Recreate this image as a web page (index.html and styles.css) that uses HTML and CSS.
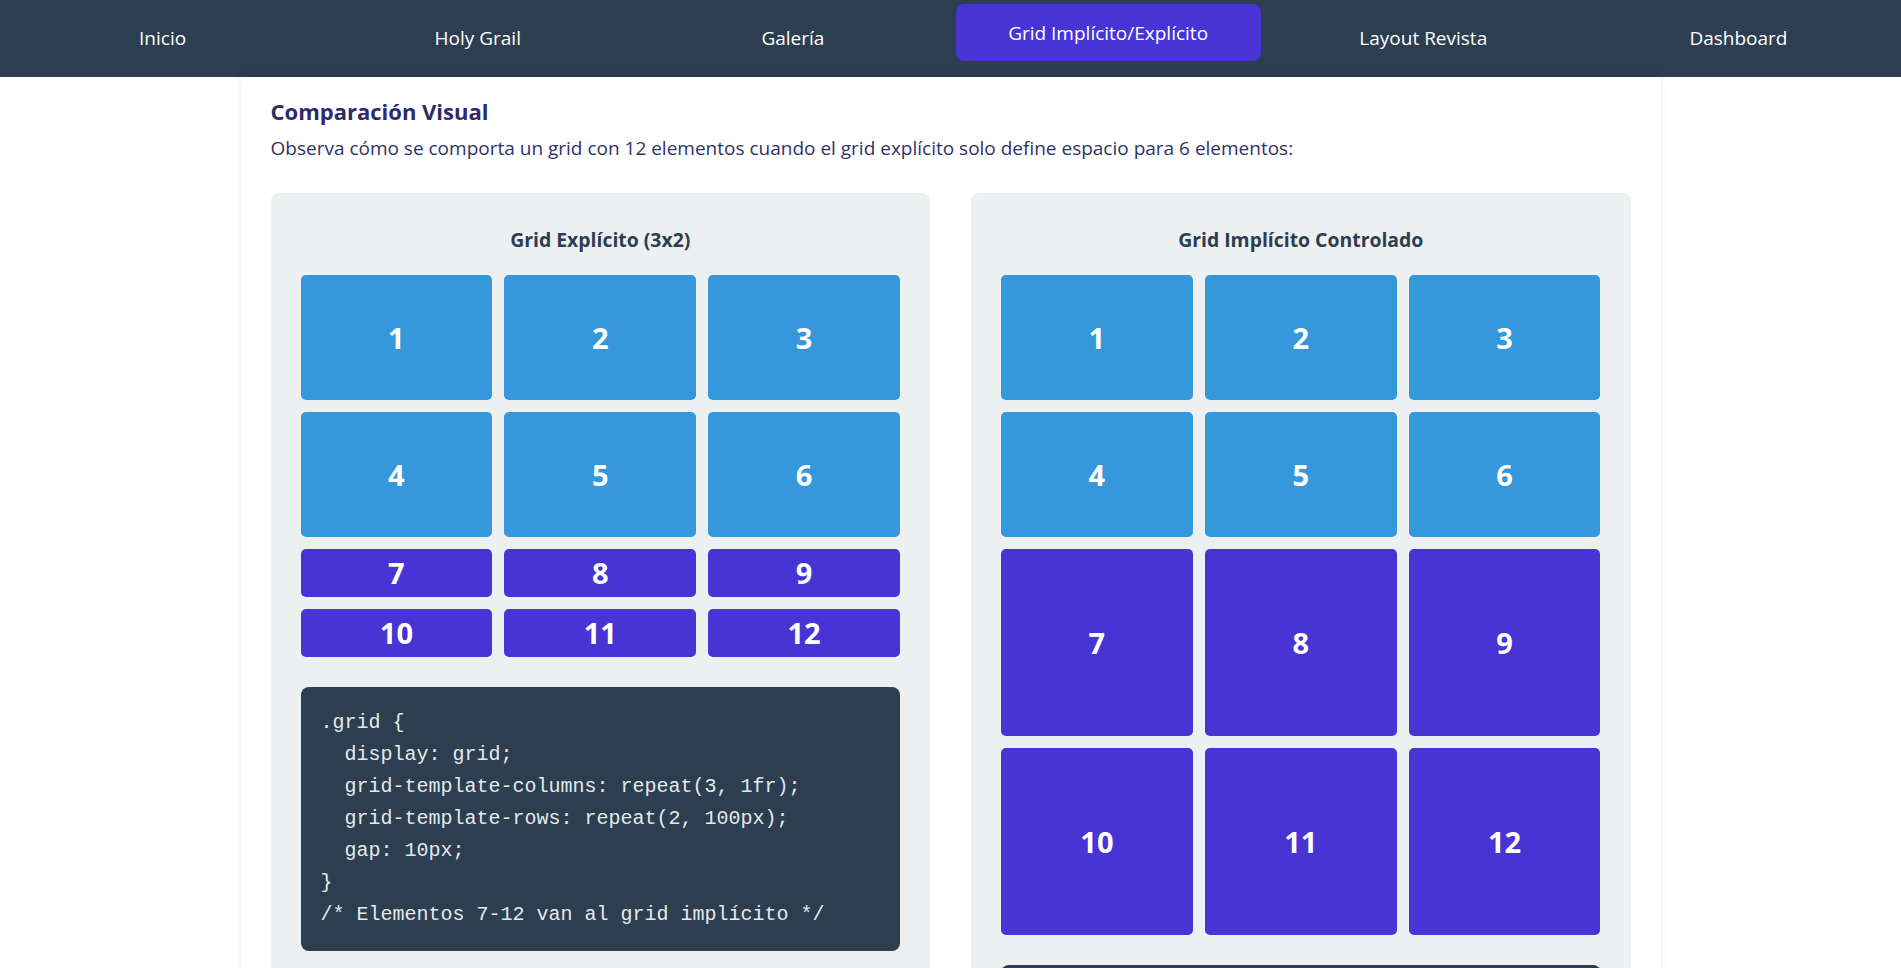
FILE: index.html
```html
<!DOCTYPE html>
<html lang="es">
<head>
<meta charset="utf-8">
<title>Grid Implícito/Explícito</title>
<link rel="stylesheet" href="styles.css">
</head>
<body>
<nav class="topnav">
  <a class="nav-link" href="#">Inicio</a>
  <a class="nav-link" href="#">Holy Grail</a>
  <a class="nav-link" href="#">Galería</a>
  <a class="nav-link active" href="#">Grid Implícito/Explícito</a>
  <a class="nav-link" href="#">Layout Revista</a>
  <a class="nav-link" href="#">Dashboard</a>
</nav>
<main class="container">
  <section class="section">
    <h2 class="section-title">Comparación Visual</h2>
    <p class="section-text">Observa cómo se comporta un grid con 12 elementos cuando el grid explícito solo define espacio para 6 elementos:</p>
    <div class="compare">
      <div class="demo-card">
        <h3 class="demo-title">Grid Explícito (3x2)</h3>
        <div class="demo-grid demo-grid-explicit">
          <div class="cell cell-explicit">1</div>
          <div class="cell cell-explicit">2</div>
          <div class="cell cell-explicit">3</div>
          <div class="cell cell-explicit">4</div>
          <div class="cell cell-explicit">5</div>
          <div class="cell cell-explicit">6</div>
          <div class="cell cell-implicit">7</div>
          <div class="cell cell-implicit">8</div>
          <div class="cell cell-implicit">9</div>
          <div class="cell cell-implicit">10</div>
          <div class="cell cell-implicit">11</div>
          <div class="cell cell-implicit">12</div>
        </div>
        <pre class="code">.grid {
  display: grid;
  grid-template-columns: repeat(3, 1fr);
  grid-template-rows: repeat(2, 100px);
  gap: 10px;
}
/* Elementos 7-12 van al grid implícito */</pre>
      </div>
      <div class="demo-card">
        <h3 class="demo-title">Grid Implícito Controlado</h3>
        <div class="demo-grid demo-grid-controlled">
          <div class="cell cell-explicit">1</div>
          <div class="cell cell-explicit">2</div>
          <div class="cell cell-explicit">3</div>
          <div class="cell cell-explicit">4</div>
          <div class="cell cell-explicit">5</div>
          <div class="cell cell-explicit">6</div>
          <div class="cell cell-implicit">7</div>
          <div class="cell cell-implicit">8</div>
          <div class="cell cell-implicit">9</div>
          <div class="cell cell-implicit">10</div>
          <div class="cell cell-implicit">11</div>
          <div class="cell cell-implicit">12</div>
        </div>
        <pre class="code">.grid {
  display: grid;
  grid-template-columns: repeat(3, 1fr);
  grid-template-rows: repeat(2, 100px);
  grid-auto-rows: 150px;
  gap: 10px;
}</pre>
      </div>
    </div>
  </section>
</main>
</body>
</html>
```

FILE: styles.css
```css
* {
  box-sizing: border-box;
}

html, body {
  margin: 0;
  padding: 0;
  background: #ffffff;
}

body {
  font-family: "Open Sans", "Noto Sans", "Liberation Sans", sans-serif;
  color: #2c3e50;
}

.topnav {
  display: flex;
  background: #2c3e50;
  padding: 9px 5px 11px;
  height: 77px;
}

.nav-link {
  flex: 1 1 0;
  margin: 0 5px;
  display: flex;
  align-items: center;
  justify-content: center;
  height: 57px;
  color: #ffffff;
  text-decoration: none;
  font-size: 19px;
  border-radius: 8px;
}

.nav-link.active {
  background: #4834d4;
  transform: translateY(-5px);
}

.container {
  width: 1420px;
  margin: 0 auto;
  padding: 20px 30px 40px;
  background: #ffffff;
  box-shadow: 0 0 8px rgba(0, 0, 0, 0.08);
}

.section-title {
  margin: 0;
  font-size: 22px;
  line-height: 29px;
  font-weight: 700;
  color: #2e2a6b;
}

.section-text {
  margin: 10px 0 0;
  font-size: 19px;
  line-height: 25px;
  color: #30336b;
}

.compare {
  display: grid;
  grid-template-columns: 1fr 1fr;
  gap: 41px;
  margin-top: 32px;
}

.demo-card {
  background: #ecf0f1;
  border-radius: 8px;
  padding: 30px;
}

.demo-title {
  margin: 4px 0 22px;
  text-align: center;
  font-size: 19.4px;
  line-height: 26px;
  font-weight: 700;
  color: #2c3e50;
}

.demo-grid {
  display: grid;
  grid-template-columns: repeat(3, 1fr);
  grid-template-rows: repeat(2, 125px);
  gap: 12px;
}

.demo-grid-controlled {
  grid-auto-rows: 187px;
}

.cell {
  display: flex;
  align-items: center;
  justify-content: center;
  border-radius: 5px;
  color: #ffffff;
  font-weight: 700;
  font-size: 29px;
  line-height: 38px;
  padding: 5px;
}

.cell-explicit {
  background: #3498db;
}

.cell-implicit {
  background: #4834d4;
}

.code {
  margin: 30px 0 0;
  background: #2c3e50;
  color: #e4e9ea;
  border-radius: 8px;
  padding: 20px;
  font-family: "Courier New", "Liberation Mono", monospace;
  font-size: 20px;
  line-height: 32px;
  white-space: pre;
  overflow: hidden;
}
```
